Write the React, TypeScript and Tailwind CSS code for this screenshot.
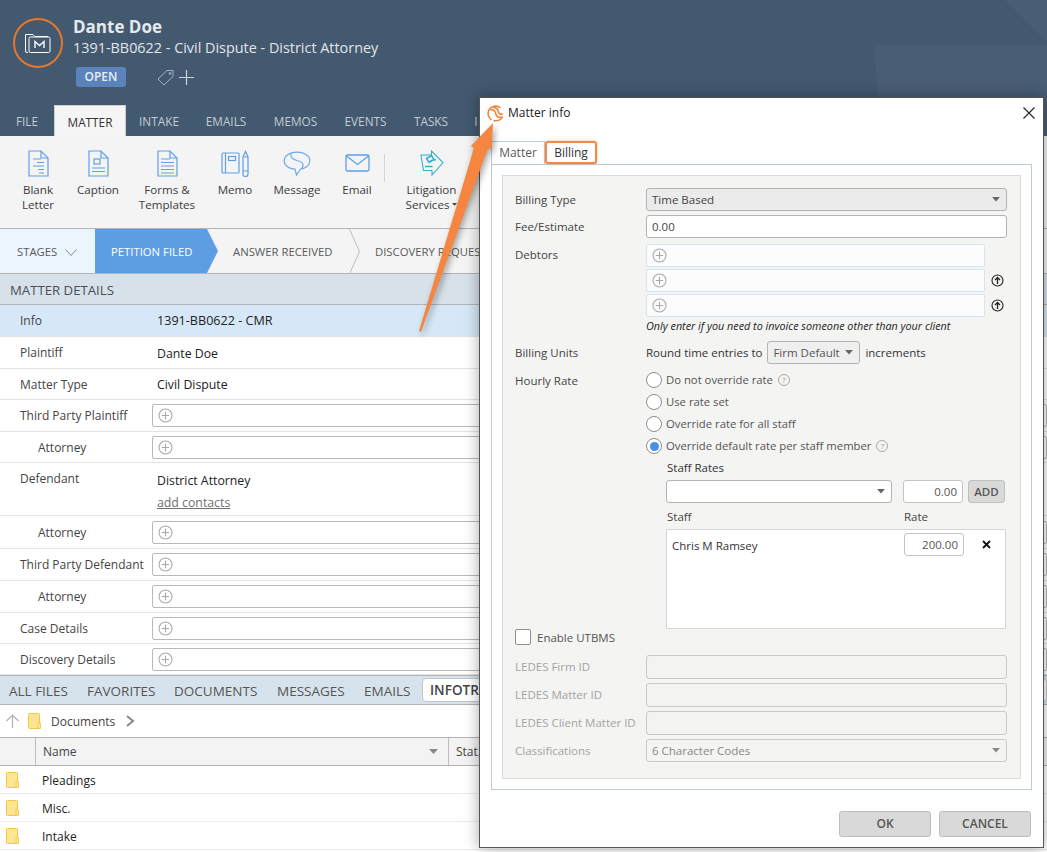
import React from "react";

const Plus = ({ c = "#a9a9a9" }: { c?: string }) => (
  <svg width="15" height="15" viewBox="0 0 15 15" fill="none" stroke={c} strokeWidth="1.1">
    <circle cx="7.5" cy="7.5" r="6.5" />
    <path d="M7.5 3.8v7.4M3.8 7.5h7.4" />
  </svg>
);
const Caret = ({ c = "#666", s = 8 }: { c?: string; s?: number }) => (
  <svg width={s} height={s * 0.55} viewBox="0 0 9 5"><path d="M0 0h9L4.5 5z" fill={c} /></svg>
);
const Folder = () => (
  <svg width="13" height="16" viewBox="0 0 13 16">
    <rect x="0.5" y="0.5" width="11" height="15" rx="1" fill="#fde68f" stroke="#efc84a" />
    <rect x="10" y="10" width="2.5" height="5.5" fill="#fde68f" stroke="#efc84a" strokeWidth="0.8" />
  </svg>
);
const Help = () => (
  <span className="ml-[5px] inline-flex h-[12px] w-[12px] items-center justify-center rounded-full border border-[#aaa] text-[8px] leading-none text-[#999]">?</span>
);

const docStroke = "#5e9fe8";
const DocBase = ({ children }: { children: React.ReactNode }) => (
  <svg width="21" height="27" viewBox="0 0 21 27" fill="none" stroke={docStroke} strokeWidth="1.2">
    <path d="M1 1h12l7 7v18H1z" />
    <path d="M13 1v7h7" />
    {children}
  </svg>
);
const BlankIcon = () => <DocBase><path d="M5 9h8M9 12.5h7M5 16h11M10 19.5h6M11 23h5" /></DocBase>;
const CaptionIcon = () => <DocBase><rect x="6" y="9" width="6" height="5" /><path d="M4 18h13M4 21.5h13" /></DocBase>;
const FormsIcon = () => <DocBase><path d="M4 9h9M4 12.5h13M4 16h13M4 19.5h13M4 23h13" /></DocBase>;
const MemoIcon = () => (
  <svg width="28" height="27" viewBox="0 0 28 27" fill="none" stroke={docStroke} strokeWidth="1.2">
    <rect x="1" y="3" width="17" height="20" rx="1" />
    <path d="M4.5 3v20" />
    <rect x="7.5" y="6.5" width="7" height="4" />
    <path d="M22 7l2.5-5.5L27 7v17.5a2.5 2 0 0 1-5 0z" />
    <path d="M22 7h5M22 21h5" />
  </svg>
);
const MessageIcon = () => (
  <svg width="28" height="25" viewBox="0 0 28 25" fill="none" stroke="#6ca9ec" strokeWidth="1.2">
    <path d="M14 1.2c7 0 12.8 3.400 12.800 8.600 0 4.800-4.500 7.800-9.300 8.400L13.500 24l-1.500-5.800C6 17.800 1.200 14.800 1.200 9.800 1.200 4.600 7 1.200 14 1.200z" />
    <path d="M8 2.500c-1 3.500 1.500 6 6 7 5 1 8 3.500 4.500 8.500" />
  </svg>
);
const EmailIcon = () => (
  <svg width="25" height="18" viewBox="0 0 25 18" fill="none" stroke={docStroke} strokeWidth="1.3">
    <rect x="1" y="1" width="23" height="16" rx="1.500" />
    <path d="M1.500 2l11 8.500L23.500 2" />
  </svg>
);
const LitigationIcon = () => (
  <svg width="24" height="26" viewBox="0 0 24 26" fill="none" stroke="#35afcf" strokeWidth="1.1">
    <path d="M1 5h10.500V1L23 12.500 12 25v-4.500H3.500z" />
    <path d="M6.500 8.500l5-3 2.500 4-5 3zM10 11l6-1.500M5 16.500h7.500" strokeWidth="1.500" />
  </svg>
);
const Logo = () => (
  <svg width="17" height="17" viewBox="0 0 17 17" fill="none" stroke="#ee8136" strokeWidth="1.500">
    <path d="M13.500 2.800C10.500 0.200 4.500 0.500 2 4.800 0 8.500 1.500 12.800 4.500 14.800" />
    <path d="M3.500 5C7 3.800 8.200 6 8.700 8.500 9.200 11 11 13 14.500 12" />
    <path d="M6.500 2.800C9.500 2.300 10.800 4.300 11.200 6.300 11.600 8.300 13 9.500 15.800 9" />
    <path d="M15.800 11.500C14.500 14.800 10.500 16.500 6.500 15.500" />
  </svg>
);

const RibbonTabs = [
  ["FILE", "w-[54px]"],
  ["MATTER", "w-[72px]"],
  ["INTAKE", "w-[66px]"],
  ["EMAILS", "w-[68px]"],
  ["MEMOS", "w-[71px]"],
  ["EVENTS", "w-[69px]"],
  ["TASKS", "w-[62px]"],
  ["I", "w-[28px]"],
] as const;

const Tool = ({ w, icon, lines }: { w: string; icon: React.ReactNode; lines: React.ReactNode[] }) => (
  <div className={`${w} flex flex-col items-center`}>
    <div className="flex h-[28px] items-center">{icon}</div>
    <div className="mt-[5px] text-center text-[11.600px] leading-[15px] text-[#3c3c3c]">
      {lines.map((l, i) => (<div key={i}>{l}</div>))}
    </div>
  </div>
);

const Row = ({ label, indent, h, sel, children, top }: { label: string; indent?: boolean; h: string; sel?: boolean; children?: React.ReactNode; top?: boolean }) => (
  <div className={`flex shrink-0 border-b border-[#e4e4e4] text-[12px] ${h} ${sel ? "bg-[#d6e8f7]" : "bg-white"} ${top ? "items-start pt-[6px]" : "items-center"}`}>
    <div className={`${indent ? "pl-[38px]" : "pl-[20px]"} w-[152px] shrink-0 pt-[1px] text-[#444]`}>{label}</div>
    <div className="min-w-0 flex-1 text-[12.300px] text-[#222]">{children}</div>
  </div>
);
const Val = ({ children }: { children: React.ReactNode }) => <div className="pl-[5px] pt-[2px]">{children}</div>;
const AddBox = () => (
  <div className="flex h-[23px] w-full items-center rounded-[2px] border border-[#b8b8b8] bg-white pl-[5px]"><Plus /></div>
);

const Chevron = () => (
  <svg width="11" height="45" viewBox="0 0 11 45" fill="none" stroke="#bdbdbd" className="shrink-0"><path d="M0.500 0l10 22.500-10 22.500" /></svg>
);

const FileRow = ({ name }: { name: string }) => (
  <div className="flex h-[28px] shrink-0 items-center border-b border-[#ececec] bg-white text-[12px] text-[#222]">
    <div className="w-[42px] pl-[6px]"><Folder /></div>
    <span className="pt-[2px]">{name}</span>
  </div>
);

const Lbl = ({ children, dim }: { children: React.ReactNode; dim?: boolean }) => (
  <div className={`w-[131px] shrink-0 text-[11.500px] ${dim ? "text-[#a3a3a3]" : "text-[#444]"}`}>{children}</div>
);
const Radio = ({ on, children }: { on?: boolean; children: React.ReactNode }) => (
  <div className="flex h-[22px] items-center text-[11.300px] text-[#555]">
    <span className="mr-[4px] flex h-[16px] w-[16px] items-center justify-center rounded-full border border-[#8f8f8f] bg-white">
      {on && <span className="h-[9px] w-[9px] rounded-full bg-[#4a90e2]" />}
    </span>
    {children}
  </div>
);
const DebtorBox = ({ up }: { up?: boolean }) => (
  <div className="flex h-[23px] items-center">
    <div className="flex h-[23px] w-[339px] items-center rounded-[2px] border border-[#d3e5f2] bg-[#fcfcfc] pl-[5px]"><Plus /></div>
    {up && (
      <svg width="13" height="13" viewBox="0 0 13 13" fill="none" stroke="#222" strokeWidth="1.100" className="ml-[6px]">
        <circle cx="6.500" cy="6.500" r="5.500" />
        <path d="M6.500 10V4M4 6l2.500-2.500L9 6" strokeWidth="1.300" />
      </svg>
    )}
  </div>
);
const Ledes = ({ label }: { label: string }) => (
  <div className="flex h-[24px] items-center">
    <Lbl dim>{label}</Lbl>
    <div className="h-[24px] w-[361px] rounded-[3px] border border-[#c9c9c9] bg-[#f3f3f2]" />
  </div>
);

export default function App() {
  return (
    <div className="relative h-[852px] w-[1047px] overflow-hidden bg-white font-['Open_Sans',sans-serif]">
      {/* Matter page */}
      <div className="flex h-[852px] flex-col">
        <header className="relative h-[136px] shrink-0 overflow-hidden bg-[#43596f]">
          <svg width="180" height="136" viewBox="0 0 180 136" className="absolute right-0 top-0">
            <path d="M8 45H180V136H18C12 105 8 75 8 45z" fill="#485e75" />
            <path d="M138 0h42v42z" fill="#485e75" />
          </svg>
          <div className="relative flex h-[105px] pl-[13px] pt-[18px]">
            <div className="flex h-[50px] w-[50px] items-center justify-center rounded-full border-2 border-[#e8762c]">
              <svg width="26" height="21" viewBox="0 0 26 21" fill="none" stroke="#fff" strokeWidth="1">
                <path d="M3 19.500H2a1.500 1.500 0 0 1-1.500-1.500V1.500H8l2 2h13" />
                <rect x="4" y="4" width="21" height="15.500" rx="1.500" />
                <path d="M10 15V8.500l4.500 4 4.500-4V15" strokeWidth="1.400" />
              </svg>
            </div>
            <div className="ml-[10px] -mt-[2px] flex flex-col">
              <div className="h-[22px] text-[17px] font-bold leading-[22px] text-[#e6e9ee]">Dante Doe</div>
              <div className="-mt-[1px] text-[14.400px] leading-[22px] text-[#e1e5ea]">1391-BB0622 - Civil Dispute - District Attorney</div>
              <div className="mt-[8px] flex items-center">
                <div className="ml-[3px] flex h-[20px] w-[50px] items-center justify-center rounded-[3px] bg-[#5b83bb] text-[12px] font-semibold text-[#e9eef5]">OPEN</div>
                <svg width="17" height="17" viewBox="0 0 17 17" fill="none" stroke="#aab4c0" strokeWidth="1" className="ml-[31px]">
                  <path d="M1 10l9-8.500h6v6L7 16z" /><circle cx="13" cy="4.500" r="1" />
                </svg>
                <svg width="15" height="15" viewBox="0 0 15 15" stroke="#cbd2da" strokeWidth="1.200" className="ml-[5px]"><path d="M7.500 0v15M0 7.500h15" /></svg>
              </div>
            </div>
          </div>
          <nav className="relative flex h-[31px] items-stretch text-[11.800px]">
            {RibbonTabs.map(([t, w]) => (
              <div key={t} className={`${w} flex items-center justify-center pt-[3px] ${t === "MATTER" ? "border-x border-t border-[#cfcfcf] bg-[#f5f5f5] text-[#333]" : "text-[#c3ccd6]"}`}>{t}</div>
            ))}
          </nav>
        </header>

        <div className="flex h-[93px] shrink-0 items-start border-b border-[#b4b4b4] bg-[#f4f4f4] pl-[8px] pt-[13px]">
          <Tool w="w-[60px]" icon={<BlankIcon />} lines={["Blank", "Letter"]} />
          <Tool w="w-[60px]" icon={<CaptionIcon />} lines={["Caption"]} />
          <Tool w="w-[78px]" icon={<FormsIcon />} lines={["Forms &", "Templates"]} />
          <Tool w="w-[58px]" icon={<MemoIcon />} lines={["Memo"]} />
          <Tool w="w-[66px]" icon={<MessageIcon />} lines={["Message"]} />
          <Tool w="w-[54px]" icon={<EmailIcon />} lines={["Email"]} />
          <div className="mt-[5px] h-[28px] w-px bg-[#d4d4d4]" />
          <Tool w="w-[93px]" icon={<LitigationIcon />} lines={["Litigation", <span key="s" className="inline-flex items-center gap-[3px]">Services <Caret c="#444" s={5} /></span>]} />
        </div>

        <div className="flex h-[45px] shrink-0 items-stretch border-b border-[#b4b4b4] bg-[#f4f4f4] text-[11.300px] text-[#5a5a5a]">
          <div className="flex w-[95px] items-center gap-[8px] bg-[#eaf5fe] pl-[17px] pt-[3px]">
            STAGES
            <svg width="12" height="7" viewBox="0 0 12 7" fill="none" stroke="#7d8a96"><path d="M.5.500l5.500 6 5.500-6" /></svg>
          </div>
          <div className="flex w-[123px] items-center bg-[#5d9de4] pl-[16px] pt-[3px] text-white [clip-path:polygon(0_0,112px_0,100%_50%,112px_100%,0_100%)]">PETITION FILED</div>
          <div className="flex w-[131px] items-center pl-[15px] pt-[3px]">ANSWER RECEIVED</div>
          <Chevron />
          <div className="flex items-center whitespace-nowrap pl-[15px] pt-[3px]">DISCOVERY REQUESTS</div>
        </div>

        <div className="flex h-[31px] shrink-0 items-center border-b border-[#b4b4b4] bg-[#d7e1ea] pl-[10px] pt-[3px] text-[13.200px] text-[#4a4f55]">MATTER DETAILS</div>

        <Row label="Info" h="h-[32px]" sel><Val><span className="text-[12.600px]">1391-BB0622 - CMR</span></Val></Row>
        <Row label="Plaintiff" h="h-[32px]"><Val><span className="relative top-[1px]">Dante Doe</span></Val></Row>
        <Row label="Matter Type" h="h-[31px]"><Val>Civil Dispute</Val></Row>
        <Row label="Third Party Plaintiff" h="h-[32px]"><AddBox /></Row>
        <Row label="Attorney" indent h="h-[31px]"><AddBox /></Row>
        <Row label="Defendant" h="h-[53px]" top>
          <div className="pl-[5px] pt-[3px] leading-[17px]">District Attorney</div>
          <div className="pl-[5px] pt-[5px] leading-[17px] text-[#707070] underline">add contacts</div>
        </Row>
        <Row label="Attorney" indent h="h-[33px]"><AddBox /></Row>
        <Row label="Third Party Defendant" h="h-[32px]"><AddBox /></Row>
        <Row label="Attorney" indent h="h-[32px]"><AddBox /></Row>
        <Row label="Case Details" h="h-[31px]"><AddBox /></Row>
        <Row label="Discovery Details" h="h-[31px]"><AddBox /></Row>

        <div className="flex h-[30px] shrink-0 items-center border-y border-[#b4b4b4] bg-[#d7e3ec] text-[13.500px] text-[#555]">
          <div className="w-[87px] pl-[9px] pt-[2px]">ALL FILES</div>
          <div className="w-[87px] pt-[2px]">FAVORITES</div>
          <div className="w-[103px] pt-[2px]">DOCUMENTS</div>
          <div className="w-[87px] pt-[2px]">MESSAGES</div>
          <div className="w-[58px] pt-[2px]">EMAILS</div>
          <div className="ml-0 flex h-[24px] flex-1 items-center rounded-[4px] border border-[#c5c5c5] bg-white pl-[7px] font-semibold text-[#444]">INFOTRACK</div>
        </div>

        <div className="flex h-[32px] shrink-0 items-center bg-white pl-[6px] text-[12px] text-[#444]">
          <svg width="13" height="14" viewBox="0 0 13 14" fill="none" stroke="#b3b3b3" strokeWidth="1.200"><path d="M6.500 14V1M.5 7l6-6 6 6" /></svg>
          <span className="ml-[9px]"><Folder /></span>
          <span className="ml-[10px] pt-[2px]">Documents</span>
          <svg width="9" height="12" viewBox="0 0 9 12" fill="none" stroke="#888" strokeWidth="2" className="ml-[11px]"><path d="M1 1l6 5-6 5" /></svg>
        </div>

        <div className="flex h-[29px] shrink-0 items-center border-y border-[#b4b4b4] bg-[#f3f3f3] text-[12px] text-[#444]">
          <div className="h-full w-[36px] border-r border-[#bdbdbd]" />
          <div className="flex h-full w-[413px] items-center justify-between border-r border-[#bdbdbd] pl-[7px] pr-[10px]">Name <Caret c="#888" s={9} /></div>
          <div className="pl-[7px]">Stat...</div>
        </div>
        <FileRow name="Pleadings" />
        <FileRow name="Misc." />
        <FileRow name="Intake" />
      </div>

      {/* Dialog window */}
      <div className="absolute left-[479px] top-[97px] flex h-[751px] w-[565px] flex-col border border-[#555] bg-white shadow-[0_0_14px_rgba(0,0,0,0.35)]">
        <div className="flex h-[43px] shrink-0 items-start justify-between pl-[7px] pr-[8px] pt-[6px]">
          <div className="flex items-center gap-[4px] text-[12px] text-[#222]"><Logo /> Matter info</div>
          <svg width="12" height="12" viewBox="0 0 12 12" stroke="#222" strokeWidth="1.100" className="mt-[3px]"><path d="M.5.500l11 11M11.500.500l-11 11" /></svg>
        </div>
        <div className="ml-[11px] flex h-[23px] shrink-0 items-stretch text-[12px]">
          <div className="flex w-[54px] items-center justify-center border-x border-t border-[#bccbd9] text-[#5a5a5a]">Matter</div>
          <div className="relative z-10 flex w-[52px] items-center justify-center rounded-[3px] border-2 border-[#ee8a4b] bg-white text-[#333] shadow-[0_0_3px_rgba(238,138,75,0.6)]">Billing</div>
        </div>
        <div className="mx-[11px] flex h-[626px] shrink-0 border border-[#bccbd9] p-[10px]">
          <div className="flex flex-1 flex-col border border-[#dcdcdc] bg-[#f4f4f3] pl-[12px] pt-[12px]">
            <div className="flex h-[23px] items-center">
              <Lbl>Billing Type</Lbl>
              <div className="flex h-[23px] w-[361px] items-center justify-between rounded-[3px] border border-[#b3b3b3] bg-[#ebebeb] pl-[5px] pr-[6px] text-[11.500px] text-[#444]">Time Based <Caret /></div>
            </div>
            <div className="mt-[4px] flex h-[23px] items-center">
              <Lbl>Fee/Estimate</Lbl>
              <div className="flex h-[23px] w-[361px] items-center rounded-[3px] border border-[#b3b3b3] bg-white pl-[5px] text-[11.500px] text-[#444]">0.00</div>
            </div>
            <div className="mt-[6px] flex">
              <div className="pt-[2px]"><Lbl>Debtors</Lbl></div>
              <div className="flex flex-col gap-[2px]">
                <DebtorBox />
                <DebtorBox up />
                <DebtorBox up />
                <div className="-mt-[1px] text-[10.800px] italic leading-[16px] text-[#222]">Only enter if you need to invoice someone other than your client</div>
              </div>
            </div>
            <div className="mt-[7px] flex h-[23px] items-center">
              <Lbl>Billing Units</Lbl>
              <span className="text-[11.500px] text-[#333]">Round time entries to</span>
              <div className="ml-[5px] flex h-[23px] w-[93px] items-center justify-between rounded-[3px] border border-[#b3b3b3] bg-[#efefef] pl-[5px] pr-[6px] text-[11.500px] text-[#555]">Firm Default <Caret /></div>
              <span className="ml-[5px] text-[11.500px] text-[#333]">increments</span>
            </div>
            <div className="mt-[5px] flex">
              <div className="pt-[3px]"><Lbl>Hourly Rate</Lbl></div>
              <div className="flex flex-col">
                <Radio>Do not override rate <Help /></Radio>
                <Radio>Use rate set</Radio>
                <Radio>Override rate for all staff</Radio>
                <Radio on>Override default rate per staff member <Help /></Radio>
                <div className="ml-[20px] flex w-[340px] flex-col">
                  <div className="h-[23px] pl-[1px] text-[11.500px] leading-[21px] text-[#333]">Staff Rates</div>
                  <div className="flex h-[23px] items-stretch">
                    <div className="flex w-[226px] items-center justify-end rounded-[3px] border border-[#b3b3b3] bg-white pr-[6px]"><Caret /></div>
                    <div className="ml-[11px] flex w-[60px] items-center justify-end rounded-[3px] border border-[#c4c4c4] bg-white pr-[5px] text-[11.500px] text-[#555]">0.00</div>
                    <div className="ml-[5px] flex w-[37px] items-center justify-center rounded-[3px] border border-[#c0c0c0] bg-[#d9d9d9] text-[11.500px] font-semibold text-[#555]">ADD</div>
                  </div>
                  <div className="flex h-[26px] items-center justify-between pl-[1px] pr-[78px] pt-[2px] text-[11.500px] text-[#444]"><span>Staff</span><span>Rate</span></div>
                  <div className="flex h-[100px] items-start border border-[#d6d6d6] bg-white pl-[5px] pr-[14px] pt-[3px]">
                    <div className="flex h-[23px] flex-1 items-center pt-[2px] text-[11.500px] text-[#333]">Chris M Ramsey</div>
                    <div className="flex h-[23px] w-[60px] items-center justify-end rounded-[3px] border border-[#c4c4c4] pr-[5px] text-[11.500px] text-[#555]">200.00</div>
                    <svg width="9" height="9" viewBox="0 0 9 9" stroke="#111" strokeWidth="1.800" className="ml-[18px] mt-[7px]"><path d="M1 1l7 7M8 1L1 8" /></svg>
                  </div>
                </div>
              </div>
            </div>
            <div className="flex h-[16px] items-center text-[11.500px] text-[#555]">
              <span className="mr-[6px] h-[16px] w-[16px] rounded-[2px] border border-[#8f8f8f] bg-white" />
              <span className="pt-[2px]">Enable UTBMS</span>
            </div>
            <div className="mt-[10px] flex flex-col gap-[4px]">
              <Ledes label="LEDES Firm ID" />
              <Ledes label="LEDES Matter ID" />
              <Ledes label="LEDES Client Matter ID" />
            </div>
            <div className="mt-[4px] flex h-[23px] items-center">
              <Lbl dim>Classifications</Lbl>
              <div className="flex h-[23px] w-[361px] items-center justify-between rounded-[3px] border border-[#c9c9c9] pl-[5px] pr-[6px] text-[11.500px] text-[#888]">6 Character Codes <Caret c="#888" /></div>
            </div>
          </div>
        </div>
        <div className="mr-[12px] mt-[21px] flex justify-end gap-[8px]">
          <div className="flex h-[26px] w-[92px] items-center justify-center rounded-[3px] border border-[#bdbdbd] bg-[#d9d9d9] text-[12px] font-semibold text-[#555]">OK</div>
          <div className="flex h-[26px] w-[92px] items-center justify-center rounded-[3px] border border-[#bdbdbd] bg-[#d9d9d9] text-[12px] font-semibold text-[#555]">CANCEL</div>
        </div>
      </div>

      {/* Annotation arrow */}
      <svg width="1047" height="852" viewBox="0 0 1047 852" className="pointer-events-none absolute left-0 top-0 drop-shadow-[2px_3px_3px_rgba(0,0,0,0.35)]">
        <path d="M493 123L491.500 150L488 148L421 332L419 331L474 148L471 146z" fill="#f5853f" />
      </svg>
    </div>
  );
}
